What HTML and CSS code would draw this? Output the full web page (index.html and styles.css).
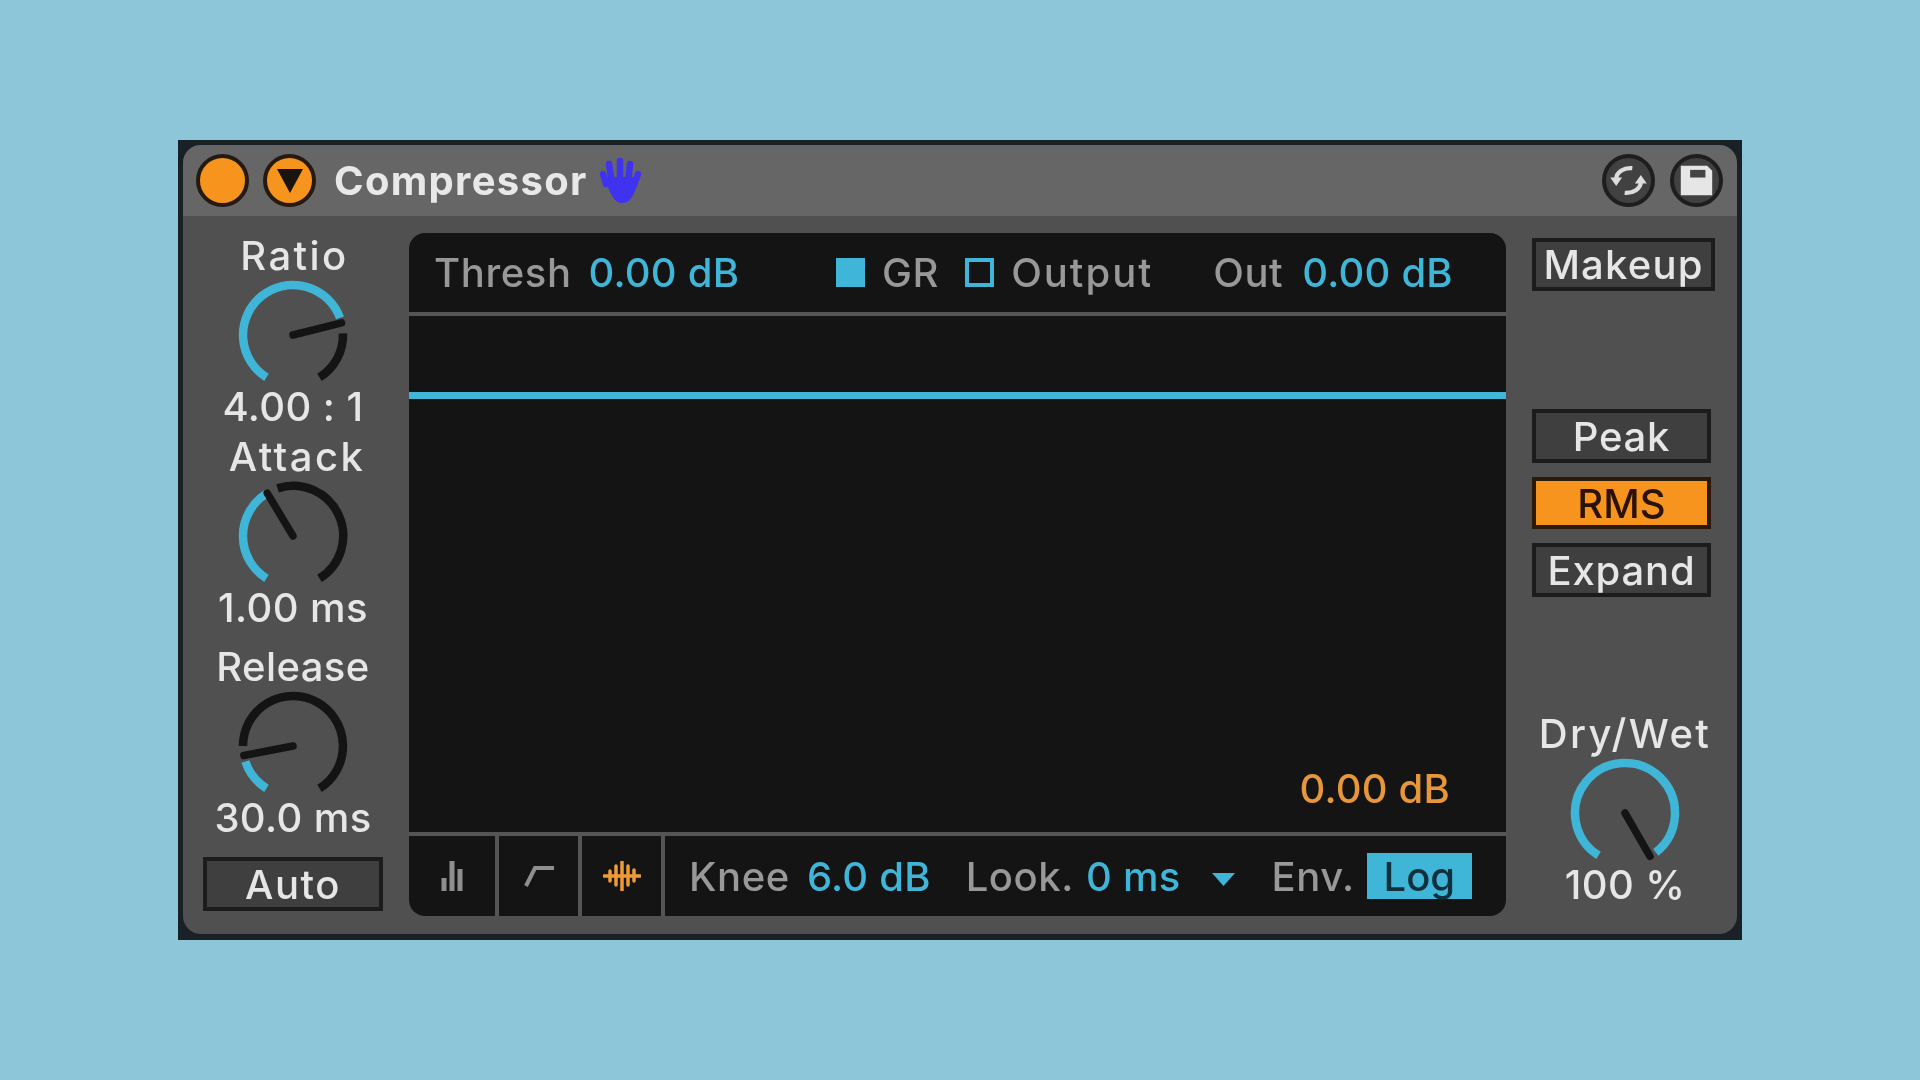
FILE: index.html
```html
<!DOCTYPE html>
<html lang="en">
<head>
<meta charset="utf-8">
<title>Compressor</title>
<link rel="stylesheet" href="styles.css">
</head>
<body>
<div class="device">
  <div class="inner">
    <header class="titlebar">
      <span class="round orange"></span>
      <span class="round orange">
        <svg class="tri" viewBox="0 0 28 26"><path d="M1 1H27L14 25Z"/></svg>
      </span>
      <span class="title">Compressor</span>
      <svg class="hand" viewBox="0 0 42 47">
        <path d="M7 27L4 17M13 27L10 7M21 27L21 4M29 27L31 7M35 28L39 17" stroke="#3f33f0" stroke-width="6.5" stroke-linecap="round" fill="none"/>
        <path d="M6 20H39C38 32 33 46 23 46C14 46 9 32 6 20Z" fill="#3f33f0"/>
      </svg>
      <span class="spacer"></span>
      <span class="round dark">
        <svg class="ico" viewBox="0 0 53 53">
          <path d="M12 25C12 17 21 11 31 12" fill="none" stroke="#ddd" stroke-width="5"/>
          <path d="M5 23H19L12 33Z" fill="#ddd"/>
          <path d="M41 28C41 36 32 42 22 41" fill="none" stroke="#ddd" stroke-width="5"/>
          <path d="M48 30H34L41 20Z" fill="#ddd"/>
        </svg>
      </span>
      <span class="round dark">
        <svg class="ico" viewBox="0 0 53 53">
          <path d="M8 9H39L45 15V44H8Z" fill="#e6e6e6"/>
          <rect x="19" y="14" width="18" height="9" fill="#444"/>
        </svg>
      </span>
    </header>
    <main class="main">
      <section class="left">
        <div class="knob-group">
          <div class="k-label wide shift-s">Ratio</div>
          <svg class="knob" viewBox="0 0 116 116">
            <path class="arc-on" d="M31.500 100.400A50 50 0 1 1 105 40.900"/>
            <path class="arc-off" d="M108 56.300A50 50 0 0 1 84.500 100.400"/>
            <path class="needle" d="M58 58L106.500 45.900"/>
          </svg>
          <div class="k-value">4.00 : 1</div>
        </div>
        <div class="knob-group attack">
          <div class="k-label wide shift">Attack</div>
          <svg class="knob" viewBox="0 0 116 116">
            <path class="arc-on" d="M31.500 100.400A50 50 0 0 1 30.800 16"/>
            <path class="arc-off" d="M42.500 10.400A50 50 0 0 1 84.500 100.400"/>
            <path class="needle" d="M58 58L32.200 15.100"/>
          </svg>
          <div class="k-value">1.00 ms</div>
        </div>
        <div class="knob-group release">
          <div class="k-label">Release</div>
          <svg class="knob" viewBox="0 0 116 116">
            <path class="arc-on" d="M31.500 100.400A50 50 0 0 1 10.400 73.500"/>
            <path class="arc-off" d="M8 58A50 50 0 1 1 84.500 100.400"/>
            <path class="needle" d="M58 58L8.900 67.500"/>
          </svg>
          <div class="k-value">30.0 ms</div>
        </div>
        <div class="btn auto">Auto</div>
      </section>
      <section class="display">
        <div class="d-head">
          <span class="lab">Thresh</span>
          <span class="val thresh-val">0.00 dB</span>
          <span class="sq fill"></span>
          <span class="lab gr">GR</span>
          <span class="sq"></span>
          <span class="lab output">Output</span>
          <span class="lab out">Out</span>
          <span class="val out-val">0.00 dB</span>
        </div>
        <div class="graph">
          <div class="gr-line"></div>
          <div class="gr-db">0.00 dB</div>
        </div>
        <div class="d-foot">
          <span class="cell first">
            <svg class="f-ico" viewBox="0 0 22 30"><path d="M3 30V17M11 30V0M19 30V8" stroke="#8f8f8f" stroke-width="5" fill="none"/></svg>
          </span>
          <span class="cell">
            <svg class="f-ico" viewBox="0 0 30 22"><path d="M2 21L11 3H30" stroke="#8f8f8f" stroke-width="4" fill="none"/></svg>
          </span>
          <span class="cell">
            <svg class="f-ico wide" viewBox="0 0 38 30"><path d="M1 15H37M7 10V20M13 5V24M19 1V29M25 5V24M31 9V20" stroke="#ee9a35" stroke-width="3.500" stroke-linecap="round" fill="none"/></svg>
          </span>
          <span class="lab knee">Knee</span>
          <span class="val knee-val">6.0 dB</span>
          <span class="lab look">Look.</span>
          <span class="val look-val">0 ms</span>
          <svg class="drop" viewBox="0 0 23 14"><path d="M0 1H23L11.500 14Z" fill="#3fb6d8"/></svg>
          <span class="lab env">Env.</span>
          <span class="log">Log</span>
        </div>
      </section>
      <section class="right">
        <div class="btn makeup">Makeup</div>
        <div class="btn peak">Peak</div>
        <div class="btn rms">RMS</div>
        <div class="btn expand">Expand</div>
        <div class="knob-group drywet">
          <div class="k-label wide">Dry/Wet</div>
          <svg class="knob" viewBox="0 0 116 116">
            <path class="arc-on" d="M31.500 100.400A50 50 0 1 1 88.800 97.400"/>
            <path class="needle" d="M58 58L83 101.300"/>
          </svg>
          <div class="k-value">100 %</div>
        </div>
      </section>
    </main>
  </div>
</div>
</body>
</html>
```
FILE: styles.css
```css
* { box-sizing: border-box; }
html, body { margin: 0; height: 100%; }
body {
  background: #8cc6d8;
  display: flex;
  align-items: center;
  justify-content: center;
  font-family: Inter, "Noto Sans", sans-serif;
  font-size: 40px;
  font-weight: 500;
  color: #e6e6e6;
}
.device { width: 1564px; height: 800px; background: #1a2126; padding: 5px 5px 6px 5px; filter: blur(0.5px); }
.inner { height: 100%; background: #505050; border-radius: 18px; overflow: hidden; display: flex; flex-direction: column; }
.titlebar { height: 71px; background: #666; display: flex; align-items: center; padding: 0 14px 0 13px; flex: none; }
.round { width: 53px; height: 53px; border-radius: 50%; border: 4px solid #241a10; display: flex; align-items: center; justify-content: center; flex: none; }
.orange { background: #f7941d; }
.orange + .orange { margin-left: 14px; }
.tri { width: 28px; height: 26px; fill: #1a1410; }
.title { margin-left: 18px; font-weight: 700; letter-spacing: 1.3px; color: #e8e8e8; white-space: nowrap; }
.hand { width: 42px; height: 47px; margin-left: 11px; }
.spacer { flex: 1; }
.dark { background: #414141; border-color: #1e1e1e; }
.dark + .dark { margin-left: 15px; }
.ico { width: 45px; height: 45px; }
.main { flex: 1; display: flex; min-height: 0; }
.left { width: 226px; padding: 20px 26px 0 20px; display: flex; flex-direction: column; align-items: center; flex: none; }
.knob-group { display: flex; flex-direction: column; align-items: center; width: 186px; }
.k-label, .k-value { height: 40px; line-height: 40px; white-space: nowrap; letter-spacing: 0.4px; }
.k-label.wide { letter-spacing: 2.4px; }
.shift { padding-left: 8px; }
.shift-s { padding-left: 3px; }
.knob { width: 116px; height: 116px; margin-top: 1px; margin-bottom: -6px; fill: none; stroke-width: 8.5; }
.arc-on { stroke: #3fb6d8; }
.arc-off { stroke: #141414; }
.needle { stroke: #141414; stroke-width: 7.5; stroke-linecap: round; }
.attack { margin-top: 10px; }
.release { margin-top: 19px; }
.btn { height: 54px; background: #3f3f3f; border: 4px solid #1c1c1c; display: flex; align-items: center; justify-content: center; white-space: nowrap; flex: none; letter-spacing: 0.8px; }
.auto { width: 180px; margin-top: 19px; letter-spacing: 1.5px; }
.display { width: 1097px; height: 683px; margin-top: 17px; background: #141414; border-radius: 16px; display: flex; flex-direction: column; flex: none; overflow: hidden; }
.d-head { height: 79px; display: flex; align-items: center; padding-left: 25px; flex: none; }
.lab { color: #989898; white-space: nowrap; letter-spacing: 0.6px; }
.val { color: #3fb6d8; white-space: nowrap; letter-spacing: 0.2px; }
.thresh-val { margin-left: 17px; }
.sq { width: 29px; height: 29px; border: 4px solid #3fb6d8; flex: none; margin-left: 26px; }
.sq.fill { background: #3fb6d8; margin-left: 97px; }
.gr { margin-left: 17px; }
.output { margin-left: 17px; width: 139px; overflow: hidden; letter-spacing: 2px; }
.out { margin-left: 63px; }
.out-val { margin-left: 19px; }
.graph { flex: 1; border-top: 4px solid #555; border-bottom: 4px solid #555; padding-top: 76px; display: flex; flex-direction: column; }
.gr-line { height: 7px; background: #40b5d5; }
.gr-db { margin-top: auto; margin-bottom: 19px; align-self: flex-end; margin-right: 56px; color: #e8963a; letter-spacing: 0.2px; }
.d-foot { height: 80px; display: flex; align-items: center; flex: none; }
.cell { width: 83px; height: 100%; border-right: 4px solid #555; display: flex; align-items: center; justify-content: center; flex: none; }
.cell.first { width: 90px; }
.f-ico { width: 30px; height: 22px; }
.first .f-ico { width: 22px; height: 30px; }
.f-ico.wide { width: 38px; height: 30px; }
.knee { margin-left: 24px; }
.knee-val { margin-left: 17px; }
.look { margin-left: 35px; }
.look-val { margin-left: 12px; }
.drop { width: 23px; height: 14px; margin-left: 32px; margin-top: 6px; flex: none; }
.env { margin-left: 36px; }
.log { margin-left: 12px; width: 105px; height: 46px; background: #3fb6d8; color: #12303c; display: flex; align-items: center; justify-content: center; }
.right { flex: 1; padding: 22px 0 0 26px; display: flex; flex-direction: column; align-items: flex-start; }
.makeup { width: 183px; height: 53px; letter-spacing: 1.2px; }
.peak { width: 179px; margin-top: 118px; }
.rms { width: 179px; height: 52px; margin-top: 14px; background: #f7941d; border-color: #2a1a0a; color: #2a1208; letter-spacing: 0; }
.expand { width: 179px; margin-top: 14px; }
.drywet { margin-top: 117px; }
```
